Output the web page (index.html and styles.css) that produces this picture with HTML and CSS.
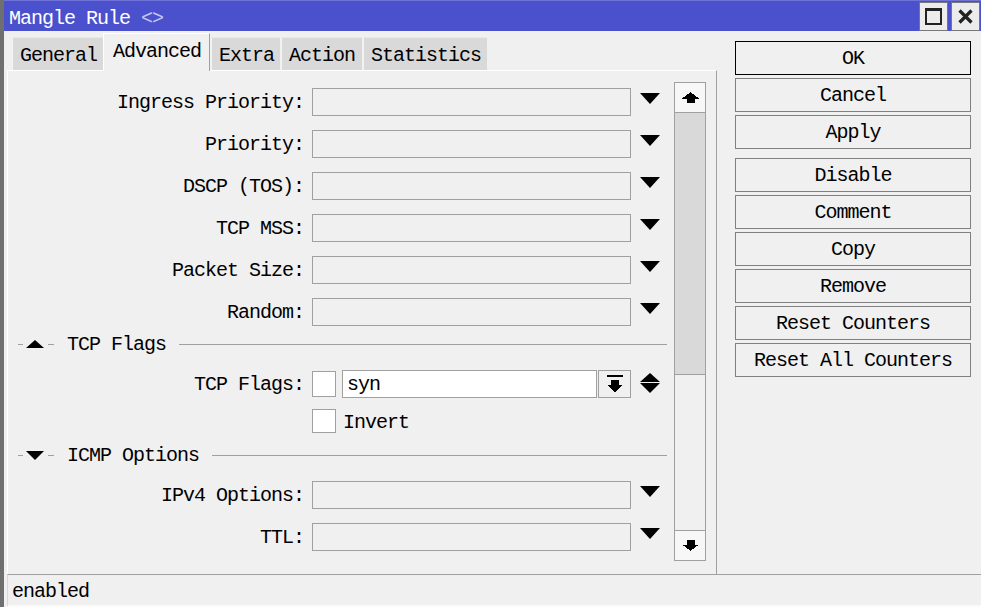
FILE: index.html
```html
<!DOCTYPE html>
<html>
<head>
<meta charset="utf-8">
<title>Mangle Rule</title>
<link rel="stylesheet" href="styles.css">
</head>
<body>
<div class="window">
  <div class="titlebar">
    <span class="title">Mangle Rule <span class="dim">&lt;&gt;</span></span>
    <div class="wbtns">
      <div class="wbtn"><svg width="17" height="17" viewBox="0 0 17 17" shape-rendering="crispEdges"><rect x="0" y="0" width="17" height="3" fill="#222"/><rect x="0" y="0" width="2" height="17" fill="#222"/><rect x="15" y="0" width="2" height="17" fill="#222"/><rect x="0" y="15" width="17" height="2" fill="#222"/></svg></div>
      <div class="wbtn"><svg width="15" height="15" viewBox="0 0 15 15"><path d="M1.5 1.5 L13.5 13.5 M13.5 1.5 L1.5 13.5" stroke="#222" stroke-width="3.2" fill="none"/></svg></div>
    </div>
  </div>
  <div class="content">
    <div class="main">
      <div class="tabs">
        <div class="tab t-general">General</div>
        <div class="tab active">Advanced</div>
        <div class="tab t-extra">Extra</div>
        <div class="tab t-action">Action</div>
        <div class="tab t-stats">Statistics</div>
      </div>
      <div class="panel">
        <div class="form">
          <div class="row first"><div class="label">Ingress Priority:</div><div class="input"></div><div class="dd"></div></div>
          <div class="row"><div class="label">Priority:</div><div class="input"></div><div class="dd"></div></div>
          <div class="row"><div class="label">DSCP (TOS):</div><div class="input"></div><div class="dd"></div></div>
          <div class="row"><div class="label">TCP MSS:</div><div class="input"></div><div class="dd"></div></div>
          <div class="row"><div class="label">Packet Size:</div><div class="input"></div><div class="dd"></div></div>
          <div class="row"><div class="label">Random:</div><div class="input"></div><div class="dd"></div></div>
          <div class="section">
            <div class="sec-dash"></div><div class="tri-up"></div><div class="sec-dash2"></div>
            <div class="sec-text">TCP Flags</div><div class="sec-line"></div>
          </div>
          <div class="row"><div class="label">TCP Flags:</div><div class="check"></div><div class="input white">syn</div>
            <div class="mini-btn"><svg width="16" height="17" viewBox="0 0 16 17" shape-rendering="crispEdges"><rect x="0" y="0" width="16" height="2" fill="#000"/><rect x="4" y="5" width="8" height="5" fill="#000"/><polygon points="0,10 16,10 8,17" fill="#000"/></svg></div>
            <div class="updown"><div class="ud-up"></div><div class="ud-down"></div></div>
          </div>
          <div class="row invert"><div class="label"></div><div class="check sq"></div><div class="inv-text">Invert</div></div>
          <div class="section icmp">
            <div class="sec-dash"></div><div class="tri-down"></div><div class="sec-dash2"></div>
            <div class="sec-text">ICMP Options</div><div class="sec-line"></div>
          </div>
          <div class="row"><div class="label">IPv4 Options:</div><div class="input"></div><div class="dd"></div></div>
          <div class="row"><div class="label">TTL:</div><div class="input"></div><div class="dd"></div></div>
        </div>
        <div class="scrollbar">
          <div class="sb-btn up"><svg width="17" height="11" viewBox="0 0 17 11" shape-rendering="crispEdges"><polygon points="0,6.5 8.5,0 17,6.5" fill="#000"/><rect x="4.5" y="6" width="8" height="5" fill="#000"/></svg></div>
          <div class="sb-thumb"></div>
          <div class="sb-track"></div>
          <div class="sb-btn down"><svg width="17" height="11" viewBox="0 0 17 11" shape-rendering="crispEdges"><rect x="4.5" y="0" width="8" height="5" fill="#000"/><polygon points="0,4.5 17,4.5 8.5,11" fill="#000"/></svg></div>
        </div>
      </div>
    </div>
    <div class="side">
      <div class="btn ok">OK</div>
      <div class="btn">Cancel</div>
      <div class="btn">Apply</div>
      <div class="btn group">Disable</div>
      <div class="btn">Comment</div>
      <div class="btn">Copy</div>
      <div class="btn">Remove</div>
      <div class="btn">Reset Counters</div>
      <div class="btn">Reset All Counters</div>
    </div>
  </div>
  <div class="status">enabled</div>
</div>
</body>
</html>
```
FILE: styles.css
```css
* { box-sizing: border-box; }
html, body { margin: 0; padding: 0; }
body {
  width: 981px;
  height: 607px;
  overflow: hidden;
  background: #f0f0f0;
  font-family: "Liberation Mono", monospace;
  font-size: 20px;
  letter-spacing: -1px;
  color: #000;
}
.window {
  height: 607px;
  border-left: 4px solid #6f6f6f;
  display: flex;
  flex-direction: column;
}
.titlebar {
  height: 31px;
  flex: none;
  background: #4b50cd;
  color: #fff;
  display: flex;
  align-items: flex-start;
  justify-content: space-between;
  padding-left: 5px;
  border-top: 1px solid #6f73d8;
}
.title { line-height: 22px; padding-top: 7px; }
.title .dim { color: #c3c6f3; }
.wbtns {
  display: flex;
  gap: 3px;
  margin-top: 1px;
  margin-right: 1px;
}
.wbtn {
  width: 29px;
  height: 29px;
  background: #ececec;
  border: 1px solid #777;
  display: flex;
  align-items: center;
  justify-content: center;
}
.content {
  height: 543px;
  flex: none;
  display: flex;
  padding-left: 3px;
}
.main {
  width: 710px;
  display: flex;
  flex-direction: column;
}
.tabs {
  height: 39px;
  flex: none;
  display: flex;
  align-items: flex-end;
  padding-left: 5px;
}
.tab {
  height: 33px;
  padding: 2px 0 0 7px;
  margin-right: 1px;
  background: #d9d9d9;
  border-top: 1px solid #e8e8e8;
  border-left: 1px solid #f4f4f4;
  display: flex;
  align-items: center;
  white-space: nowrap;
}
.t-general { width: 91px; margin-right: 0; }
.t-extra { width: 69px; }
.t-action { width: 81px; }
.t-stats { width: 124px; }
.tab.active {
  width: 107px;
  height: 38px;
  margin-bottom: -1px;
  padding: 0 0 3px 9px;
  background: #f0f0f0;
  border-top: 1px solid #fff;
  border-left: 1px solid #fff;
  border-right: 1px solid #a0a0a0;
  position: relative;
  z-index: 1;
}
.panel {
  height: 504px;
  display: flex;
  border-top: 1px solid #fff;
  border-left: 1px solid #fff;
  border-right: 1px solid #a0a0a0;
}
.form {
  width: 666px;
  display: flex;
  flex-direction: column;
}
.row {
  height: 28px;
  flex: none;
  display: flex;
  align-items: center;
  margin-top: 14px;
}
.row.first { margin-top: 17px; }
.label {
  width: 296px;
  margin-right: 8px;
  text-align: right;
  white-space: nowrap;
  padding-top: 1px;
}
.input {
  width: 319px;
  height: 28px;
  border: 1px solid #a0a0a0;
  background: #f0f0f0;
}
.dd {
  align-self: flex-start;
  margin-top: 5px;
  margin-left: 9px;
  width: 0;
  height: 0;
  border-left: 10px solid transparent;
  border-right: 10px solid transparent;
  border-top: 11px solid #000;
}
.section {
  height: 22px;
  flex: none;
  display: flex;
  align-items: center;
  margin-top: 7px;
  margin-bottom: 1px;
  padding-right: 7px;
}
.section.icmp { margin-top: 9px; }
.sec-dash {
  width: 5px;
  height: 1px;
  background: #a0a0a0;
  margin-left: 10px;
}
.sec-dash2 {
  width: 6px;
  height: 1px;
  background: #a0a0a0;
  margin-left: 4px;
}
.tri-up, .tri-down {
  width: 0;
  height: 0;
  margin-left: 3px;
  border-left: 9px solid transparent;
  border-right: 9px solid transparent;
}
.tri-up { border-bottom: 8px solid #000; }
.tri-down { border-top: 9px solid #000; }
.sec-text { margin-left: 13px; white-space: nowrap; padding-top: 1px; }
.sec-line {
  flex: 1;
  height: 1px;
  background: #a0a0a0;
  margin-left: 13px;
}
.check {
  width: 24px;
  height: 26px;
  background: #fff;
  border: 1px solid #a0a0a0;
  margin-right: 6px;
}
.check.sq { height: 24px; margin-right: 7px; }
.input.white {
  width: 255px;
  background: #fff;
  padding-left: 4px;
  line-height: 28px;
}
.mini-btn {
  width: 33px;
  height: 28px;
  margin-left: 1px;
  border: 1px solid #a0a0a0;
  background: #f0f0f0;
  display: flex;
  justify-content: center;
  align-items: flex-start;
  padding-top: 4px;
}
.updown {
  align-self: flex-start;
  margin-top: 3px;
  margin-left: 9px;
  display: flex;
  flex-direction: column;
  gap: 1px;
}
.ud-up, .ud-down {
  width: 0;
  height: 0;
  border-left: 10px solid transparent;
  border-right: 10px solid transparent;
}
.ud-up { border-bottom: 9px solid #000; }
.ud-down { border-top: 10px solid #000; }
.row.invert { height: 28px; margin-top: 9px; }
.inv-text { white-space: nowrap; padding-top: 2px; }
.scrollbar {
  width: 32px;
  margin: 11px 10px 13px 0;
  border: 1px solid #a0a0a0;
  display: flex;
  flex-direction: column;
}
.sb-btn {
  height: 30px;
  flex: none;
  background: #f7f7f7;
  display: flex;
  align-items: center;
  justify-content: center;
}
.sb-btn.up { border-bottom: 1px solid #a0a0a0; }
.sb-btn.down { border-top: 1px solid #a0a0a0; }
.sb-thumb {
  height: 262px;
  flex: none;
  background: #d9d9d9;
  border-bottom: 1px solid #a0a0a0;
}
.sb-track { flex: 1; background: #f0f0f0; }
.side {
  width: 236px;
  margin-left: 18px;
  padding-top: 10px;
  display: flex;
  flex-direction: column;
}
.btn {
  height: 34px;
  flex: none;
  margin-bottom: 3px;
  border: 1px solid #808080;
  background: #f0f0f0;
  text-align: center;
  line-height: 30px;
  padding-top: 2px;
  white-space: nowrap;
}
.btn.ok { border-color: #000; }
.btn.group { margin-top: 6px; }
.status {
  height: 33px;
  flex: none;
  margin-left: 3px;
  border-top: 1px solid #a0a0a0;
  border-left: 1px solid #d8d8d8;
  border-bottom: 2px solid #fafafa;
  padding: 3px 0 0 4px;
  display: flex;
  align-items: center;
}
```
